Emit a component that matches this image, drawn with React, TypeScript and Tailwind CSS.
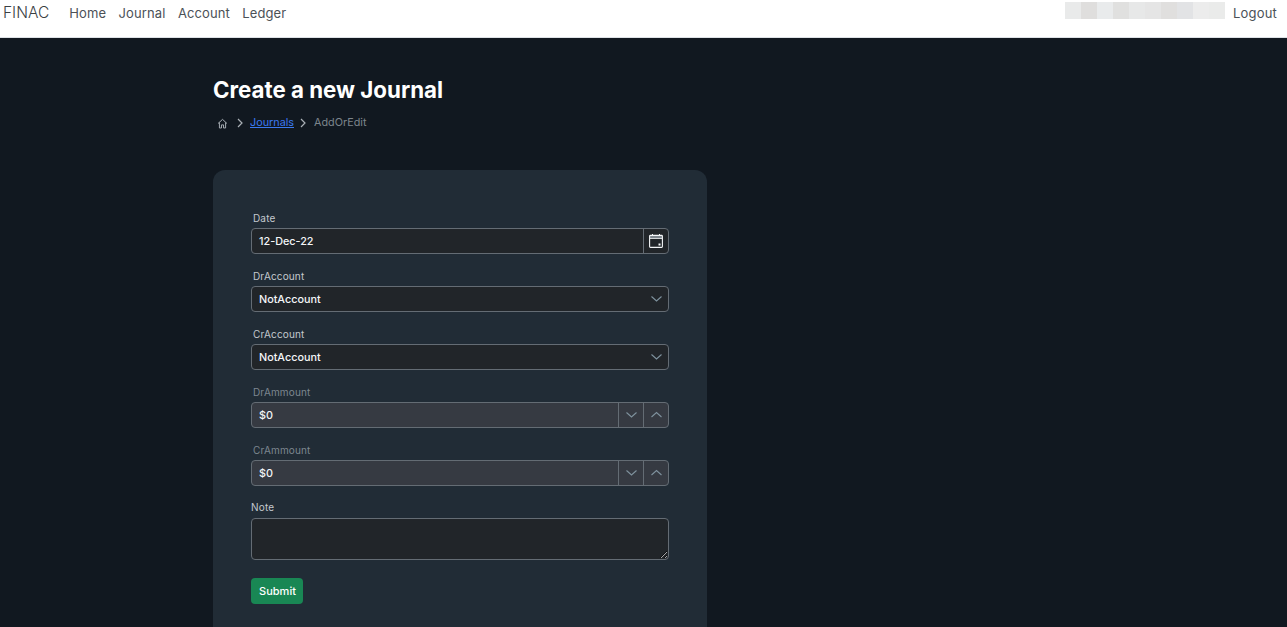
import React from "react";

const Chevron = ({ up = false }: { up?: boolean }) => (
  <svg width="11" height="11" viewBox="0 0 11 11" fill="none" stroke="#7f929e" strokeWidth="1.1" className="block">
    <path d={up ? "M.5 7l5-4.5 5 4.5" : "M.5 2.5l5 4.5 5-4.5"} />
  </svg>
);

const Label = ({ children, dim = false }: { children: React.ReactNode; dim?: boolean }) => (
  <label className={`block h-[16px] pl-[2px] text-[10px] leading-[12px] tracking-[0.15px] ${dim ? "text-[#7d8790]" : "text-[#c4c9ce]"}`}>
    {children}
  </label>
);

const Value = ({ children }: { children: React.ReactNode }) => (
  <span className="flex-1 pl-[7px] text-[10.8px] font-medium leading-[25px] text-[#f4f6f8]">{children}</span>
);

const Amount = ({ label }: { label: string }) => (
  <div className="mb-[16px] h-[42px]">
    <Label dim>{label}</Label>
    <div className="flex h-[26px] items-stretch rounded-[4px] border border-[#646c74] bg-[#363a42]">
      <Value>$0</Value>
      <span className="flex w-[25px] items-center justify-center border-l border-[#646c74]"><Chevron /></span>
      <span className="flex w-[25px] items-center justify-center border-l border-[#646c74]"><Chevron up /></span>
    </div>
  </div>
);

const SelectField = ({ label }: { label: string }) => (
  <div className="mb-[16px] h-[42px]">
    <Label>{label}</Label>
    <div className="flex h-[26px] items-center rounded-[4px] border border-[#646c74] bg-[#212529] pr-[6px]">
      <Value>NotAccount</Value>
      <Chevron />
    </div>
  </div>
);

const cells = ["#e9eaea", "#dfdedd", "#e9ebec", "#e0e0df", "#e7e8e8", "#e5e5e5", "#e0dfde", "#e2e3e5", "#ececec", "#eaebea"];

export default function App() {
  return (
    <div className="h-screen overflow-hidden bg-[#111820] font-['Inter',sans-serif]">
      <nav className="flex h-[38px] items-start border-b border-[#dee2e6] bg-white">
        <span className="ml-[3px] mt-[3px] text-[15.5px] font-light leading-[20px] text-[#3a3f44]">FINAC</span>
        <div className="ml-[20px] mt-[3px] flex gap-[12.5px] text-[13px] leading-[20px] tracking-[0.1px] text-[#4b5157]">
          <span>Home</span>
          <span>Journal</span>
          <span>Account</span>
          <span>Ledger</span>
        </div>
        <div className="ml-auto mt-[2px] flex h-[17px]">
          {cells.map((c, i) => (
            <span key={i} className="h-full w-[16px]" style={{ backgroundColor: c }} />
          ))}
        </div>
        <span className="ml-[8px] mr-[10px] mt-[3px] text-[13px] leading-[20px] tracking-[0.2px] text-[#4b5157]">Logout</span>
      </nav>

      <main className="pl-[213px] pt-[37px]">
        <h1 className="text-[22.3px] font-bold leading-[29px] text-white">Create a new Journal</h1>
        <div className="mt-[11px] flex h-[16px] items-center pl-[4px] text-[10.8px] text-[#7d858c]">
          <svg width="11" height="11" viewBox="0 0 16 16" fill="none" stroke="#aab0b6" strokeWidth="1.4" strokeLinejoin="round">
            <path d="M1.5 8 8 2l6.5 6M3.5 6.5V14.5h3V10h3v4.5h3V6.5" />
          </svg>
          <svg width="8" height="10" viewBox="0 0 8 10" fill="none" stroke="#aab0b6" strokeWidth="1.2" className="ml-[8px] mr-[6px]">
            <path d="M2 1l4 4-4 4" />
          </svg>
          <span className="text-[#3b79f0] underline">Journals</span>
          <svg width="8" height="10" viewBox="0 0 8 10" fill="none" stroke="#aab0b6" strokeWidth="1.2" className="ml-[5px] mr-[7px]">
            <path d="M2 1l4 4-4 4" />
          </svg>
          <span>AddOrEdit</span>
        </div>

        <div className="mt-[39px] h-[600px] w-[494px] rounded-[12px] bg-[#212c36] px-[38px] pt-[42px]">
          <div className="mb-[16px] h-[42px]">
            <Label>Date</Label>
            <div className="flex h-[26px] items-stretch rounded-[4px] border border-[#646c74] bg-[#212529]">
              <Value>12-Dec-22</Value>
              <span className="flex w-[25px] items-center justify-center border-l border-[#646c74]">
                <svg width="14" height="14" viewBox="0 0 14 14" fill="none" className="block">
                  <path d="M1 1.5h12v3H1z" fill="#7d858c" />
                  <rect x=".6" y="1.4" width="12.8" height="12" rx=".8" stroke="#f4f6f8" strokeWidth="1.1" />
                  <path d="M1 4.5h12" stroke="#f4f6f8" strokeWidth=".8" />
                  <path d="M3.5 0v1.5M10.5 0v1.5" stroke="#f4f6f8" strokeWidth="1" />
                  <rect x="9.5" y="9.5" width="2" height="2" fill="#f4f6f8" />
                </svg>
              </span>
            </div>
          </div>
          <SelectField label="DrAccount" />
          <SelectField label="CrAccount" />
          <Amount label="DrAmmount" />
          <Amount label="CrAmmount" />
          <label className="block h-[16px] text-[10px] leading-[10px] tracking-[0.2px] text-[#c4c9ce]">Note</label>
          <textarea className="block h-[42px] w-full resize-y rounded-[4px] border border-[#646c74] bg-[#212529]" />
          <button className="mt-[18px] h-[26px] w-[52px] rounded-[4px] bg-[#198754] pl-[1px] text-[11px] font-medium text-white">Submit</button>
        </div>
      </main>
    </div>
  );
}
